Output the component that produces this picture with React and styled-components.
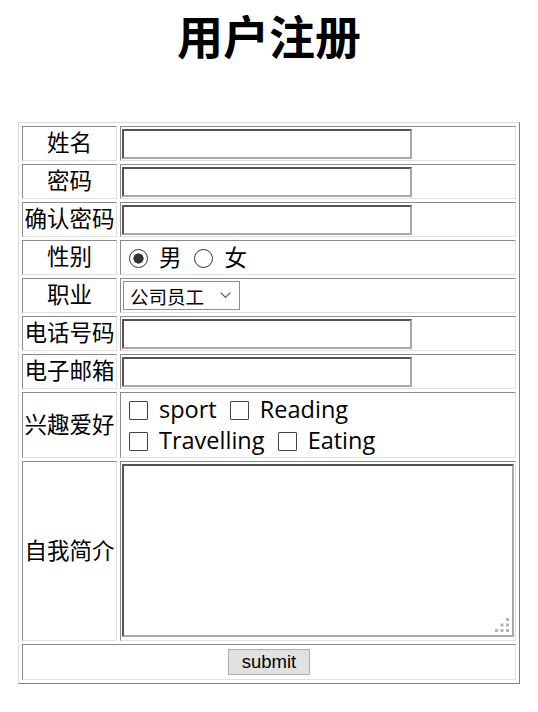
import React from 'react';
import styled, { createGlobalStyle } from 'styled-components';

const GlobalStyle = createGlobalStyle`
  body {
    margin: 0;
    background: #fff;
    color: #000;
    font-family: "Open Sans", "Noto Sans CJK SC", sans-serif;
  }
`;

const Page = styled.div`
  padding-top: 1px;
`;

const Title = styled.h1`
  margin: 0;
  text-align: center;
  font-family: "Noto Sans CJK SC", sans-serif;
  font-size: 46px;
  font-weight: 700;
  line-height: 66px;
`;

const FormTable = styled.table`
  margin: 55px auto 0;
  width: 502px;
  border-collapse: separate;
  border-spacing: 3px;
  border: 1px solid;
  border-color: #dcdcdc #808080 #808080 #dcdcdc;
`;

const Cell = styled.td`
  box-sizing: border-box;
  height: ${p => p.$h || 35}px;
  padding: 1px;
  border: 1px solid;
  border-color: #8a8a8a #e0e0e0 #e0e0e0 #8a8a8a;
  vertical-align: middle;
`;

const LabelCell = styled(Cell)`
  width: 96px;
  padding: 0 0 5px;
  text-align: center;
  white-space: nowrap;
  font-family: "Noto Sans CJK SC", sans-serif;
  font-size: 22.5px;
  line-height: 26px;
`;

const ButtonCell = styled(Cell)`
  text-align: center;
`;

const TextInput = styled.input`
  display: block;
  box-sizing: border-box;
  width: 290px;
  height: 30px;
  margin: 0;
  padding: 1px 3px;
  border: 2px inset #a8a8a8;
  background: #fff;
  font-size: 18px;
`;

const Choices = styled.div`
  padding-left: 7px;
  font-size: ${p => p.$size || 22.5}px;
  line-height: 31px;
  white-space: nowrap;
`;

const Radio = styled.input.attrs({ type: 'radio' })`
  appearance: none;
  box-sizing: border-box;
  width: 19px;
  height: 19px;
  margin: 0 11px 0 0;
  vertical-align: -2px;
  border: 1.5px solid #333;
  border-radius: 50%;
  background: #fff;

  &:checked {
    background: radial-gradient(circle, #333 0 4.8px, #fff 5.4px);
  }
`;

const Check = styled.input.attrs({ type: 'checkbox' })`
  appearance: none;
  box-sizing: border-box;
  width: 19px;
  height: 19px;
  margin: 0 11px 0 0;
  vertical-align: -2px;
  border: 1.5px solid #444;
  border-radius: 1px;
  background: #fff;
`;

const Option = styled.label`
  margin-right: 7px;
`;

const SelectBox = styled.div`
  position: relative;
  display: inline-block;
  margin-left: 1px;
  vertical-align: middle;
`;

const Select = styled.select`
  appearance: none;
  box-sizing: border-box;
  width: 117px;
  height: 29px;
  margin: 0;
  padding: 0 0 0 6px;
  border: 1.5px solid #8e8e8e;
  border-radius: 0;
  background: #fff;
  color: #000;
  font-family: "Noto Sans CJK SC", sans-serif;
  font-size: 18.5px;
`;

const Chevron = styled.svg`
  position: absolute;
  top: 11px;
  right: 9px;
  pointer-events: none;
`;

const AreaBox = styled.div`
  position: relative;
  width: 392px;
`;

const TextArea = styled.textarea`
  display: block;
  box-sizing: border-box;
  width: 392px;
  height: 173px;
  margin: 1px 0 2px;
  padding: 2px;
  border: 2px inset #a8a8a8;
  resize: none;
  font-size: 18px;
`;

const Grip = styled.svg`
  position: absolute;
  right: 5px;
  bottom: 5px;
  pointer-events: none;
`;

const Submit = styled.button`
  box-sizing: border-box;
  width: 82px;
  height: 26px;
  padding: 0;
  border: 1px solid #adadad;
  background: #e1e1e1;
  color: #000;
  font-family: "Liberation Sans", Arial, sans-serif;
  font-size: 18.5px;
  line-height: 22px;
  vertical-align: middle;
`;

const textFields = [
  ['姓名', 'text'],
  ['密码', 'password'],
  ['确认密码', 'password'],
];

const contactFields = [
  ['电话号码', 'tel'],
  ['电子邮箱', 'email'],
];

export default function App() {
  return (
    <Page>
      <GlobalStyle />
      <Title>用户注册</Title>
      <form onSubmit={e => e.preventDefault()}>
        <FormTable>
          <tbody>
            {textFields.map(([label, type]) => (
              <tr key={label}>
                <LabelCell>{label}</LabelCell>
                <Cell><TextInput type={type} /></Cell>
              </tr>
            ))}
            <tr>
              <LabelCell>性别</LabelCell>
              <Cell>
                <Choices>
                  <Option><Radio name="sex" defaultChecked />男</Option>
                  {' '}
                  <Option><Radio name="sex" />女</Option>
                </Choices>
              </Cell>
            </tr>
            <tr>
              <LabelCell>职业</LabelCell>
              <Cell>
                <SelectBox>
                  <Select defaultValue="staff">
                    <option value="staff">公司员工</option>
                    <option value="student">学生</option>
                    <option value="other">其他</option>
                  </Select>
                  <Chevron width="11" height="7" viewBox="0 0 11 7">
                    <path d="M0.7 0.7 L5.5 5.5 L10.3 0.7" fill="none" stroke="#555" strokeWidth="1.2" />
                  </Chevron>
                </SelectBox>
              </Cell>
            </tr>
            {contactFields.map(([label, type]) => (
              <tr key={label}>
                <LabelCell>{label}</LabelCell>
                <Cell><TextInput type={type} /></Cell>
              </tr>
            ))}
            <tr>
              <LabelCell $h={66}>兴趣爱好</LabelCell>
              <Cell $h={66}>
                <Choices $size={23.5}>
                  <Option><Check />sport</Option>
                  {' '}
                  <Option><Check />Reading</Option>
                  <br />
                  <Option><Check />Travelling</Option>
                  {' '}
                  <Option><Check />Eating</Option>
                </Choices>
              </Cell>
            </tr>
            <tr>
              <LabelCell $h={180}>自我简介</LabelCell>
              <Cell $h={180}>
                <AreaBox>
                  <TextArea />
                  <Grip width="14" height="14" viewBox="0 0 14 14">
                    <g fill="#b4b4b4">
                      <rect x="11" y="0" width="3" height="3" />
                      <rect x="5.5" y="5.5" width="3" height="3" />
                      <rect x="11" y="5.5" width="3" height="3" />
                      <rect x="0" y="11" width="3" height="3" />
                      <rect x="5.5" y="11" width="3" height="3" />
                      <rect x="11" y="11" width="3" height="3" />
                    </g>
                  </Grip>
                </AreaBox>
              </Cell>
            </tr>
            <tr>
              <ButtonCell colSpan={2} $h={36}>
                <Submit type="submit">submit</Submit>
              </ButtonCell>
            </tr>
          </tbody>
        </FormTable>
      </form>
    </Page>
  );
}
